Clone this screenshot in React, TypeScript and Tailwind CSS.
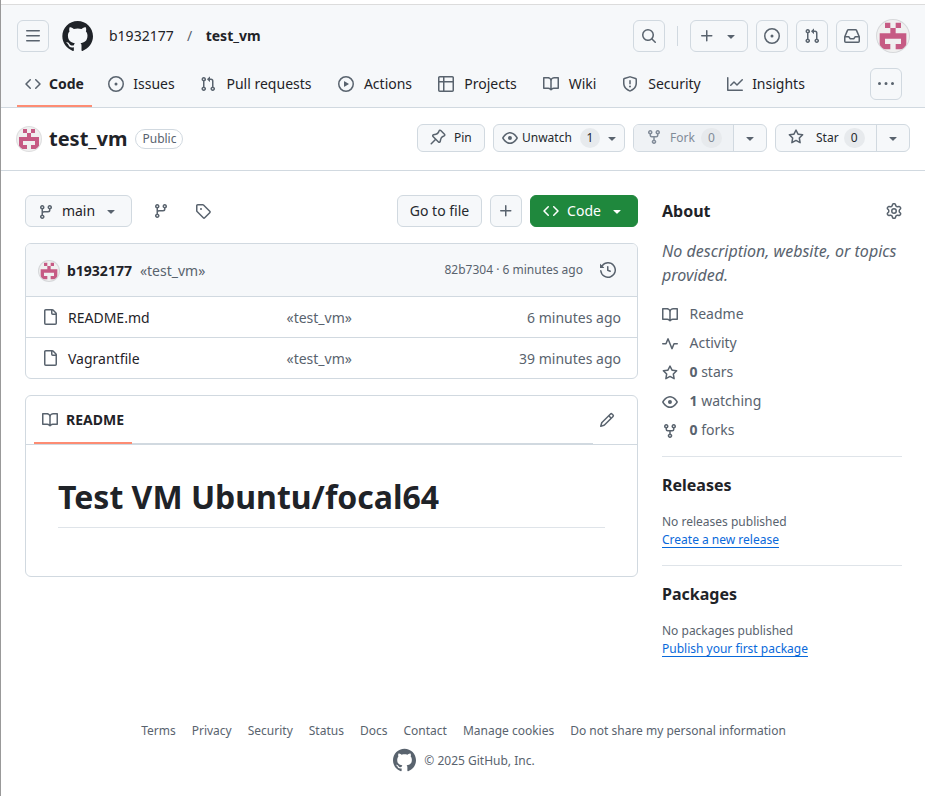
import React from "react";

const PATHS = {
  bars: "M1 2.75A.75.75 0 0 1 1.75 2h12.5a.75.75 0 0 1 0 1.5H1.75A.75.75 0 0 1 1 2.75Zm0 5A.75.75 0 0 1 1.75 7h12.5a.75.75 0 0 1 0 1.5H1.75A.75.75 0 0 1 1 7.75ZM1.75 12h12.5a.75.75 0 0 1 0 1.5H1.75a.75.75 0 0 1 0-1.5Z",
  code: "m11.28 3.22 4.25 4.25a.75.75 0 0 1 0 1.06l-4.25 4.25a.749.749 0 0 1-1.275-.326.749.749 0 0 1 .215-.734L13.94 8l-3.72-3.72a.749.749 0 0 1 .326-1.275.749.749 0 0 1 .734.215Zm-6.56 0a.751.751 0 0 1 1.042.018.751.751 0 0 1 .018 1.042L2.06 8l3.72 3.72a.749.749 0 0 1-.326 1.275.749.749 0 0 1-.734-.215L.47 8.53a.75.75 0 0 1 0-1.06Z",
  issue: "M8 9.5a1.5 1.5 0 1 0 0-3 1.5 1.5 0 0 0 0 3ZM8 0a8 8 0 1 1 0 16A8 8 0 0 1 8 0ZM1.5 8a6.5 6.5 0 1 0 13 0 6.5 6.5 0 0 0-13 0Z",
  pull: "M1.5 3.25a2.25 2.25 0 1 1 3 2.122v5.256a2.251 2.251 0 1 1-1.5 0V5.372A2.25 2.25 0 0 1 1.5 3.25Zm5.677-.177L9.573.677A.25.25 0 0 1 10 .854V2.5h1A2.5 2.5 0 0 1 13.5 5v5.628a2.251 2.251 0 1 1-1.5 0V5a1 1 0 0 0-1-1h-1v1.646a.25.25 0 0 1-.427.177L7.177 3.427a.25.25 0 0 1 0-.354ZM3.75 2.5a.75.75 0 1 0 0 1.5.75.75 0 0 0 0-1.5Zm0 9.5a.75.75 0 1 0 0 1.5.75.75 0 0 0 0-1.5Zm8.25.75a.75.75 0 1 0 1.5 0 .75.75 0 0 0-1.5 0Z",
  play: "M8 0a8 8 0 1 1 0 16A8 8 0 0 1 8 0ZM1.5 8a6.5 6.5 0 1 0 13 0 6.5 6.5 0 0 0-13 0Zm4.879-2.773 4.264 2.559a.25.25 0 0 1 0 .428l-4.264 2.559A.25.25 0 0 1 6 10.559V5.442a.25.25 0 0 1 .379-.215Z",
  table: "M0 1.75C0 .784.784 0 1.75 0h12.5C15.216 0 16 .784 16 1.75v12.5A1.75 1.75 0 0 1 14.25 16H1.75A1.75 1.75 0 0 1 0 14.25ZM6.5 6.5v8h7.75a.25.25 0 0 0 .25-.25V6.5Zm8-1.5V1.75a.25.25 0 0 0-.25-.25H6.5V5Zm-13 1.5v7.75c0 .138.112.25.25.25H5v-8ZM5 5V1.5H1.75a.25.25 0 0 0-.25.25V5Z",
  book: "M0 1.75A.75.75 0 0 1 .75 1h4.253c1.227 0 2.317.59 3 1.501A3.743 3.743 0 0 1 11.006 1h4.245a.75.75 0 0 1 .75.75v10.5a.75.75 0 0 1-.75.75h-4.507a2.25 2.25 0 0 0-1.591.659l-.622.621a.75.75 0 0 1-1.06 0l-.622-.621A2.25 2.25 0 0 0 5.258 13H.75a.75.75 0 0 1-.75-.75Zm7.251 10.324.004-5.073-.002-2.253A2.25 2.25 0 0 0 5.003 2.5H1.5v9h3.757a3.75 3.75 0 0 1 1.994.574ZM8.755 4.75l-.004 7.322a3.752 3.752 0 0 1 1.992-.572H14.5v-9h-3.495a2.25 2.25 0 0 0-2.25 2.25Z",
  shield: "M7.467.133a1.748 1.748 0 0 1 1.066 0l5.25 1.68A1.75 1.75 0 0 1 15 3.48V7c0 1.566-.32 3.182-1.303 4.682-.983 1.498-2.585 2.813-5.032 3.855a1.697 1.697 0 0 1-1.33 0c-2.447-1.042-4.049-2.357-5.032-3.855C1.32 10.182 1 8.566 1 7V3.48a1.75 1.75 0 0 1 1.217-1.667Zm.61 1.429a.25.25 0 0 0-.153 0l-5.25 1.68a.25.25 0 0 0-.174.238V7c0 1.358.275 2.666 1.057 3.86.784 1.194 2.121 2.34 4.366 3.297a.196.196 0 0 0 .154 0c2.245-.956 3.582-2.104 4.366-3.298C13.225 9.666 13.5 8.36 13.5 7V3.48a.251.251 0 0 0-.174-.237l-5.25-1.68ZM8.75 4.75v3a.75.75 0 0 1-1.5 0v-3a.75.75 0 0 1 1.5 0ZM9 10.5a1 1 0 1 1-2 0 1 1 0 0 1 2 0Z",
  graph: "M1.5 1.75V13.5h13.75a.75.75 0 0 1 0 1.5H.75a.75.75 0 0 1-.75-.75V1.75a.75.75 0 0 1 1.5 0Zm14.28 2.53-5.25 5.25a.75.75 0 0 1-1.06 0L7 7.06 4.28 9.78a.751.751 0 0 1-1.042-.018.751.751 0 0 1-.018-1.042l3.25-3.25a.75.75 0 0 1 1.06 0L10 7.94l4.72-4.72a.751.751 0 0 1 1.042.018.751.751 0 0 1 .018 1.042Z",
  kebab: "M8 9a1.5 1.5 0 1 0 0-3 1.5 1.5 0 0 0 0 3ZM1.5 9a1.5 1.5 0 1 0 0-3 1.5 1.5 0 0 0 0 3Zm13 0a1.5 1.5 0 1 0 0-3 1.5 1.5 0 0 0 0 3Z",
  search: "M10.68 11.74a6 6 0 0 1-7.922-8.982 6 6 0 0 1 8.982 7.922l3.04 3.04a.749.749 0 0 1-.326 1.275.749.749 0 0 1-.734-.215ZM11.5 7a4.499 4.499 0 1 0-8.997 0A4.499 4.499 0 0 0 11.5 7Z",
  plus: "M7.75 2a.75.75 0 0 1 .75.75V7h4.25a.75.75 0 0 1 0 1.5H8.5v4.25a.75.75 0 0 1-1.5 0V8.5H2.75a.75.75 0 0 1 0-1.5H7V2.75A.75.75 0 0 1 7.75 2Z",
  caret: "m4.427 7.427 3.396 3.396a.25.25 0 0 0 .354 0l3.396-3.396A.25.25 0 0 0 11.396 7H4.604a.25.25 0 0 0-.177.427Z",
  inbox: "M2.8 2.06A1.75 1.75 0 0 1 4.41 1h7.18c.7 0 1.333.417 1.61 1.06l2.74 6.395c.04.093.06.194.06.295v4.5A1.75 1.75 0 0 1 14.25 15H1.75A1.75 1.75 0 0 1 0 13.25v-4.5c0-.101.02-.202.06-.295Zm1.61.44a.25.25 0 0 0-.23.152L1.887 8H4.75a.75.75 0 0 1 .6.3L6.625 10h2.75l1.275-1.7a.75.75 0 0 1 .6-.3h2.863L11.82 2.652a.25.25 0 0 0-.23-.152Zm10.09 7h-2.875l-1.275 1.7a.75.75 0 0 1-.6.3h-3.5a.75.75 0 0 1-.6-.3L4.375 9.5H1.5v3.75c0 .138.112.25.25.25h12.5a.25.25 0 0 0 .25-.25Z",
  pin: "m11.294.984 3.722 3.722a1.75 1.75 0 0 1-.504 2.826l-1.327.613a3.089 3.089 0 0 0-1.707 2.084l-.584 2.454c-.317 1.332-1.972 1.8-2.94.832L5.75 11.311 1.78 15.28a.749.749 0 1 1-1.06-1.06l3.969-3.97-2.204-2.204c-.968-.968-.5-2.623.832-2.94l2.454-.584a3.08 3.08 0 0 0 2.084-1.707l.613-1.327a1.75 1.75 0 0 1 2.826-.504ZM6.283 9.723l2.732 2.731a.25.25 0 0 0 .42-.119l.584-2.454a4.586 4.586 0 0 1 2.537-3.098l1.328-.613a.25.25 0 0 0 .072-.404l-3.722-3.722a.25.25 0 0 0-.404.072l-.613 1.328a4.584 4.584 0 0 1-3.098 2.537l-2.454.584a.25.25 0 0 0-.119.42l2.731 2.732Z",
  eye: "M8 2c1.981 0 3.671.992 4.933 2.078 1.27 1.091 2.187 2.345 2.637 3.023a1.62 1.62 0 0 1 0 1.798c-.45.678-1.367 1.932-2.637 3.023C11.67 13.008 9.981 14 8 14c-1.981 0-3.671-.992-4.933-2.078C1.797 10.83.88 9.576.43 8.898a1.62 1.62 0 0 1 0-1.798c.45-.677 1.367-1.931 2.637-3.022C4.33 2.992 6.019 2 8 2ZM1.679 7.932a.12.12 0 0 0 0 .136c.411.622 1.241 1.75 2.366 2.717C5.176 11.758 6.527 12.5 8 12.5c1.473 0 2.825-.742 3.955-1.715 1.124-.967 1.954-2.096 2.366-2.717a.12.12 0 0 0 0-.136c-.412-.621-1.242-1.75-2.366-2.717C10.824 4.242 9.473 3.5 8 3.5c-1.473 0-2.825.742-3.955 1.715-1.124.967-1.954 2.096-2.366 2.717ZM8 10a2 2 0 1 1-.001-3.999A2 2 0 0 1 8 10Z",
  fork: "M5 5.372v.878c0 .414.336.75.75.75h4.5a.75.75 0 0 0 .75-.75v-.878a2.25 2.25 0 1 1 1.5 0v.878a2.25 2.25 0 0 1-2.25 2.25h-1.5v2.128a2.251 2.251 0 1 1-1.5 0V8.5h-1.5A2.25 2.25 0 0 1 3.5 6.25v-.878a2.25 2.25 0 1 1 1.5 0ZM5 3.25a.75.75 0 1 0-1.5 0 .75.75 0 0 0 1.5 0Zm6.75.75a.75.75 0 1 0 0-1.5.75.75 0 0 0 0 1.5Zm-3 8.75a.75.75 0 1 0-1.5 0 .75.75 0 0 0 1.5 0Z",
  star: "M8 .25a.75.75 0 0 1 .673.418l1.882 3.815 4.21.612a.75.75 0 0 1 .416 1.279l-3.046 2.97.719 4.192a.751.751 0 0 1-1.088.791L8 12.347l-3.766 1.98a.75.75 0 0 1-1.088-.79l.72-4.194L.818 6.374a.75.75 0 0 1 .416-1.28l4.21-.611L7.327.668A.75.75 0 0 1 8 .25Zm0 2.445L6.615 5.5a.75.75 0 0 1-.564.41l-3.097.45 2.24 2.184a.75.75 0 0 1 .216.664l-.528 3.084 2.769-1.456a.75.75 0 0 1 .698 0l2.77 1.456-.53-3.084a.75.75 0 0 1 .216-.664l2.24-2.183-3.096-.45a.75.75 0 0 1-.564-.41L8 2.694Z",
  branch: "M9.5 3.25a2.25 2.25 0 1 1 3 2.122V6A2.5 2.5 0 0 1 10 8.5H6a1 1 0 0 0-1 1v1.128a2.251 2.251 0 1 1-1.5 0V5.372a2.25 2.25 0 1 1 1.5 0v1.836A2.493 2.493 0 0 1 6 7h4a1 1 0 0 0 1-1v-.628A2.25 2.25 0 0 1 9.5 3.25Zm-6 0a.75.75 0 1 0 1.5 0 .75.75 0 0 0-1.5 0Zm8.25-.75a.75.75 0 1 0 0 1.5.75.75 0 0 0 0-1.5ZM4.25 12a.75.75 0 1 0 0 1.5.75.75 0 0 0 0-1.5Z",
  tag: "M1 7.775V2.75C1 1.784 1.784 1 2.75 1h5.025c.464 0 .91.184 1.238.513l6.25 6.25a1.75 1.75 0 0 1 0 2.474l-5.026 5.026a1.75 1.75 0 0 1-2.474 0l-6.25-6.25A1.752 1.752 0 0 1 1 7.775Zm1.5 0c0 .066.026.13.073.177l6.25 6.25a.25.25 0 0 0 .354 0l5.025-5.025a.25.25 0 0 0 0-.354l-6.25-6.25a.25.25 0 0 0-.177-.073H2.75a.25.25 0 0 0-.25.25ZM6 5a1 1 0 1 1 0 2 1 1 0 0 1 0-2Z",
  history: "m.427 1.927 1.215 1.215a8.002 8.002 0 1 1-1.6 5.685.75.75 0 1 1 1.493-.154 6.5 6.5 0 1 0 1.18-4.458l1.358 1.358A.25.25 0 0 1 3.896 6H.25A.25.25 0 0 1 0 5.75V2.104a.25.25 0 0 1 .427-.177ZM7.75 4a.75.75 0 0 1 .75.75v2.992l2.028.812a.75.75 0 0 1-.557 1.392l-2.5-1A.751.751 0 0 1 7 8.25v-3.5A.75.75 0 0 1 7.75 4Z",
  file: "M2 1.75C2 .784 2.784 0 3.75 0h6.586c.464 0 .909.184 1.237.513l2.914 2.914c.329.328.513.773.513 1.237v9.586A1.75 1.75 0 0 1 13.25 16h-9.5A1.75 1.75 0 0 1 2 14.25Zm1.75-.25a.25.25 0 0 0-.25.25v12.5c0 .138.112.25.25.25h9.5a.25.25 0 0 0 .25-.25V6h-2.75A1.75 1.75 0 0 1 9 4.25V1.5Zm6.75.062V4.25c0 .138.112.25.25.25h2.688l-.011-.013-2.914-2.914-.013-.011Z",
  pencil: "M11.013 1.427a1.75 1.75 0 0 1 2.474 0l1.086 1.086a1.75 1.75 0 0 1 0 2.474l-8.61 8.61c-.21.21-.47.364-.756.445l-3.251.93a.75.75 0 0 1-.927-.928l.929-3.25c.081-.286.235-.547.445-.758l8.61-8.61Zm.176 4.823L9.75 4.81l-6.286 6.287a.253.253 0 0 0-.064.108l-.558 1.953 1.953-.558a.253.253 0 0 0 .108-.064Zm1.238-3.763a.25.25 0 0 0-.354 0L10.811 3.75l1.439 1.44 1.263-1.263a.25.25 0 0 0 0-.354Z",
  pulse: "M6 2c.306 0 .582.187.696.471L10 10.731l1.304-3.26A.751.751 0 0 1 12 7h3.25a.75.75 0 0 1 0 1.5h-2.742l-1.812 4.528a.751.751 0 0 1-1.392 0L6 4.77 4.696 8.03A.75.75 0 0 1 4 8.5H.75a.75.75 0 0 1 0-1.5h2.742l1.812-4.529A.751.751 0 0 1 6 2Z",
  gear: "M8 0a8.2 8.2 0 0 1 .701.031C9.444.095 9.99.645 10.16 1.29l.288 1.107c.018.066.079.158.212.224.231.114.454.243.668.386.123.082.233.09.299.071l1.103-.303c.644-.176 1.392.021 1.82.63.27.385.506.792.704 1.218.315.675.111 1.422-.364 1.891l-.814.806c-.049.048-.098.147-.088.294.016.257.016.515 0 .772-.01.147.038.246.088.294l.814.806c.475.469.679 1.216.364 1.891a7.977 7.977 0 0 1-.704 1.217c-.428.61-1.176.807-1.82.63l-1.102-.302c-.067-.019-.177-.011-.3.071a5.909 5.909 0 0 1-.668.386c-.133.066-.194.158-.211.224l-.29 1.106c-.168.646-.715 1.196-1.458 1.26a8.006 8.006 0 0 1-1.402 0c-.743-.064-1.289-.614-1.458-1.26l-.289-1.106c-.018-.066-.079-.158-.212-.224a5.738 5.738 0 0 1-.668-.386c-.123-.082-.233-.09-.299-.071l-1.103.303c-.644.176-1.392-.021-1.82-.63a8.12 8.12 0 0 1-.704-1.218c-.315-.675-.111-1.422.363-1.891l.815-.806c.05-.048.098-.147.088-.294a6.214 6.214 0 0 1 0-.772c.01-.147-.038-.246-.088-.294l-.815-.806C.635 6.045.431 5.298.746 4.623a7.92 7.92 0 0 1 .704-1.217c.428-.61 1.176-.807 1.82-.63l1.102.302c.067.019.177.011.3-.071.214-.143.437-.272.668-.386.133-.066.194-.158.211-.224l.29-1.106C6.009.645 6.556.095 7.299.03 7.53.01 7.764 0 8 0Zm-.571 1.525c-.036.003-.108.036-.137.146l-.289 1.105c-.147.561-.549.967-.998 1.189-.173.086-.34.183-.5.29-.417.278-.97.423-1.529.27l-1.103-.303c-.109-.03-.175.016-.195.045-.22.312-.412.644-.573.99-.014.031-.021.11.059.19l.815.806c.411.406.562.957.53 1.456a4.709 4.709 0 0 0 0 .582c.032.499-.119 1.05-.53 1.456l-.815.806c-.081.08-.073.159-.059.19.162.346.353.677.573.989.02.03.085.076.195.046l1.102-.303c.56-.153 1.113-.008 1.53.27.161.107.328.204.501.29.447.222.85.629.997 1.189l.289 1.105c.029.109.101.143.137.146a6.6 6.6 0 0 0 1.142 0c.036-.003.108-.036.137-.146l.289-1.105c.147-.561.549-.967.998-1.189.173-.086.34-.183.5-.29.417-.278.97-.423 1.529-.27l1.103.303c.109.029.175-.016.195-.045.22-.313.411-.644.573-.99.014-.031.021-.11-.059-.19l-.815-.806c-.411-.406-.562-.957-.53-1.456a4.709 4.709 0 0 0 0-.582c-.032-.499.119-1.05.53-1.456l.815-.806c.081-.08.073-.159.059-.19a6.464 6.464 0 0 0-.573-.989c-.02-.03-.085-.076-.195-.046l-1.102.303c-.56.153-1.113.008-1.53-.27a4.44 4.44 0 0 0-.501-.29c-.447-.222-.85-.629-.997-1.189l-.289-1.105c-.029-.11-.101-.143-.137-.146a6.6 6.6 0 0 0-1.142 0ZM11 8a3 3 0 1 1-6 0 3 3 0 0 1 6 0ZM9.5 8a1.5 1.5 0 1 0-3.001.001A1.5 1.5 0 0 0 9.5 8Z",
};

type IconName = keyof typeof PATHS;

function Icon({ name, className = "text-[#59636e]" }: { name: IconName; className?: string }) {
  return (
    <svg viewBox="0 0 16 16" width="16" height="16" fill="currentColor" className={`shrink-0 ${className}`}>
      <path d={PATHS[name]} />
    </svg>
  );
}

function Mark({ size, className }: { size: number; className: string }) {
  return (
    <svg viewBox="0 0 24 24" width={size} height={size} fill="currentColor" className={`shrink-0 ${className}`}>
      <path d="M12.5.75C6.146.75 1 5.896 1 12.25c0 5.089 3.292 9.387 7.863 10.91.575.101.79-.244.79-.546 0-.273-.014-1.178-.014-2.142-2.889.532-3.636-.704-3.866-1.35-.13-.331-.69-1.352-1.18-1.625-.402-.216-.977-.748-.014-.762.906-.014 1.553.834 1.769 1.179 1.035 1.74 2.688 1.25 3.349.948.1-.747.402-1.25.733-1.538-2.559-.287-5.232-1.279-5.232-5.678 0-1.25.445-2.285 1.178-3.09-.115-.288-.517-1.467.115-3.048 0 0 .963-.302 3.163 1.179.92-.259 1.897-.388 2.875-.388.977 0 1.955.13 2.875.388 2.2-1.495 3.162-1.179 3.162-1.179.633 1.581.23 2.76.115 3.048.733.805 1.179 1.825 1.179 3.09 0 4.413-2.688 5.39-5.247 5.678.417.36.776 1.05.776 2.128 0 1.538-.014 2.774-.014 3.162 0 .302.216.662.79.547C20.709 21.637 24 17.324 24 12.25 24 5.896 18.854.75 12.5.75Z" />
    </svg>
  );
}

/* Identicon: a 5x5 grid of cells inside a half-cell margin. */
function Avatar({ className }: { className: string }) {
  return (
    <span className={`block shrink-0 overflow-hidden rounded-full bg-[#f0f0f0] ring-1 ring-[#1f2328]/15 ${className}`}>
      <svg viewBox="0 0 12 12" className="block h-full w-full" fill="#c65b84">
        <path d="M3 1h2v2h2V1h2v2H7v2h4v6H7V9h2V7H3v2h2v2H1V5h4V3H3Z" />
      </svg>
    </span>
  );
}

const TABS: { icon: IconName; label: string; width: string }[] = [
  { icon: "code", label: "Code", width: "w-[75px]" },
  { icon: "issue", label: "Issues", width: "w-[84px]" },
  { icon: "pull", label: "Pull requests", width: "w-[130px]" },
  { icon: "play", label: "Actions", width: "w-[92px]" },
  { icon: "table", label: "Projects", width: "w-[97px]" },
  { icon: "book", label: "Wiki", width: "w-[71px]" },
  { icon: "shield", label: "Security", width: "w-[97px]" },
  { icon: "graph", label: "Insights", width: "w-[95px]" },
];

const box = "flex h-8 items-center justify-center rounded-md border border-[#d1d9e0]";
const smallBtn = "flex h-7 items-center rounded-md border border-[#d1d9e0] bg-[#f6f8fa] text-xs text-[#25292e]";
const counter = "flex h-5 items-center justify-center rounded-full bg-[#e7eaed]";

function Header() {
  return (
    <header className="h-[104px] border-t border-b border-t-[#dcdcdc] border-b-[#d1d9e0] bg-[#f6f8fa]">
      <div className="flex h-[47px] items-end pl-4 pr-[17px]">
        <button className={`${box} w-8`}><Icon name="bars" /></button>
        <Mark size={32} className="ml-3 text-[#1f2328]" />
        <div className="ml-4 flex h-8 items-center">
          <span>b1932177</span>
          <span className="w-[32px] text-center text-[#59636e]">/</span>
          <span className="font-bold">test_vm</span>
        </div>
        <div className="ml-auto flex h-8 items-center">
          <button className={`${box} w-8`}><Icon name="search" /></button>
          <span className="mx-3 h-5 w-px bg-[#d1d9e0]" />
          <button className={`${box} w-[58px] gap-2`}><Icon name="plus" /><Icon name="caret" /></button>
          <button className={`${box} ml-2 w-8`}><Icon name="issue" /></button>
          <button className={`${box} ml-2 w-8`}><Icon name="pull" /></button>
          <button className={`${box} ml-2 w-8`}><Icon name="inbox" /></button>
          <Avatar className="ml-[9px] h-8 w-8" />
        </div>
      </div>
      <nav className="mt-2 flex h-[47px] items-start pl-4 pr-6">
        <div className="flex gap-2">
          {TABS.map((t, i) => (
            <a key={t.label} className={`flex h-[47px] items-center gap-2 border-b-2 px-2 pt-[3px] ${t.width} ${i === 0 ? "-mr-px border-[#fd8c73] font-bold" : "border-transparent"} ${i === 1 ? "ml-px" : ""}`}>
              <Icon name={t.icon} />
              <span className="flex-1 text-center whitespace-nowrap">{t.label}</span>
            </a>
          ))}
        </div>
        <button className={`${box} mt-2 ml-auto w-8`}><Icon name="kebab" /></button>
      </nav>
    </header>
  );
}

function RepoBar() {
  return (
    <div className="flex h-[63px] items-center border-b border-[#d1d9e0] pl-4 pr-4 pb-px">
      <Avatar className="h-6 w-6" />
      <h1 className="ml-2 text-xl font-bold">test_vm</h1>
      <span className="ml-2 flex h-5 w-12 items-center justify-center rounded-full border border-[#d1d9e0] text-xs text-[#59636e]">Public</span>
      <div className="ml-auto flex gap-2 pb-px">
        <button className={`${smallBtn} w-[68px] pl-3`}><Icon name="pin" className="mb-[2px] text-[#59636e]" /><span className="ml-2">Pin</span></button>
        <button className={`${smallBtn} w-[132px] pl-2`}>
          <Icon name="eye" />
          <span className="ml-1">Unwatch</span>
          <span className={`${counter} ml-2 w-5`}>1</span>
          <Icon name="caret" className="ml-1 text-[#59636e]" />
        </button>
        <div className={`${smallBtn} w-[134px] overflow-hidden`}>
          <button className="flex h-full w-[99px] items-center bg-[#eff2f5] pl-3 text-[#818b98]">
            <Icon name="fork" className="mb-[2px] text-[#818b98]" />
            <span className="ml-2">Fork</span>
            <span className={`${counter} ml-[6px] w-[21px]`}>0</span>
          </button>
          <button className="flex h-full flex-1 items-center justify-center border-l border-[#d1d9e0]"><Icon name="caret" /></button>
        </div>
        <div className={`${smallBtn} w-[135px] overflow-hidden`}>
          <button className="flex h-full w-[100px] items-center pl-3">
            <Icon name="star" className="mb-[2px] text-[#59636e]" />
            <span className="ml-3">Star</span>
            <span className={`${counter} ml-[5px] w-[21px]`}>0</span>
          </button>
          <button className="flex h-full flex-1 items-center justify-center border-l border-[#d1d9e0]"><Icon name="caret" /></button>
        </div>
      </div>
    </div>
  );
}

function Toolbar() {
  return (
    <div className="flex h-8 items-center">
      <button className={`${box} w-[107px] bg-[#f6f8fa]`}>
        <Icon name="branch" className="mt-[2px] text-[#59636e]" /><span className="ml-2">main</span><Icon name="caret" className="ml-2 text-[#59636e]" />
      </button>
      <Icon name="branch" className="ml-[21px] text-[#59636e]" />
      <Icon name="tag" className="ml-[26px] text-[#59636e]" />
      <button className={`${box} ml-auto w-[85px] bg-[#f6f8fa] text-[#25292e]`}>Go to file</button>
      <button className={`${box} ml-2 w-8 bg-[#f6f8fa]`}><Icon name="plus" /></button>
      <button className="ml-2 flex h-8 w-[108px] items-center justify-center gap-2 rounded-md border border-[#1f883d] bg-[#1f883d] text-white">
        <Icon name="code" className="text-white" /><span>Code</span><Icon name="caret" className="text-white" />
      </button>
    </div>
  );
}

function Files() {
  const rows = [
    ["README.md", "«test_vm»", "6 minutes ago"],
    ["Vagrantfile", "«test_vm»", "39 minutes ago"],
  ];
  return (
    <div className="mt-4 overflow-hidden rounded-md border border-[#d1d9e0]">
      <div className="flex h-[52px] items-center bg-[#f6f8fa] pl-[13px] pr-[21px]">
        <Avatar className="mt-[2px] h-5 w-5" />
        <span className="ml-2 pt-[2px] font-bold">b1932177</span>
        <span className="ml-2 pt-[2px] text-[#59636e]">«test_vm»</span>
        <span className="ml-auto text-xs leading-5 text-[#59636e]">82b7304 · 6 minutes ago</span>
        <Icon name="history" className="ml-[17px] text-[#59636e]" />
      </div>
      {rows.map((r) => (
        <div key={r[0]} className="flex h-[41px] items-center border-t border-[#d1d9e0] px-4">
          <Icon name="file" />
          <span className="ml-[10px] w-[218.5px] pt-[2px]">{r[0]}</span>
          <span className="pt-[2px] text-[#59636e]">{r[1]}</span>
          <span className="ml-auto pt-[2px] text-[#59636e]">{r[2]}</span>
        </div>
      ))}
    </div>
  );
}

function Readme() {
  return (
    <div className="mt-4 h-[182px] rounded-md border border-[#d1d9e0]">
      <div className="flex h-[49px] border-b border-[#d1d9e0] pl-2 pr-[22px]">
        <div className="flex h-12 w-[559px] border-b border-[#d1d9e0]">
          <div className="flex h-12 w-[98px] items-center border-b-2 border-[#fd8c73] pl-2 pt-[2px] font-bold">
            <Icon name="book" /><span className="ml-2">README</span>
          </div>
        </div>
        <Icon name="pencil" className="ml-auto mt-4 text-[#59636e]" />
      </div>
      <div className="px-8 pt-8">
        <h2 className="h-[51px] border-b border-[#d1d9e0]/70 text-[32px] leading-[40px] font-bold">Test VM Ubuntu/focal64</h2>
      </div>
    </div>
  );
}

const STATS: { icon: IconName; count?: string; label: string }[] = [
  { icon: "book", label: "Readme" },
  { icon: "pulse", label: "Activity" },
  { icon: "star", count: "0", label: "stars" },
  { icon: "eye", count: "1", label: "watching" },
  { icon: "fork", count: "0", label: "forks" },
];

function EmptySection({ title, text, link }: { title: string; text: string; link: string }) {
  return (
    <section className="h-[109px] border-t border-[#d1d9e0]/70 pt-4">
      <h2 className="text-base leading-6 font-bold">{title}</h2>
      <p className="mt-4 text-xs leading-[18px] text-[#59636e]">{text}</p>
      <a className="block text-xs leading-[18px] text-[#0969da] underline underline-offset-[3px]">{link}</a>
    </section>
  );
}

function Sidebar() {
  return (
    <aside className="w-[240px] text-[#59636e]">
      <div className="flex h-8 items-center justify-between">
        <h2 className="text-base font-bold text-[#1f2328]">About</h2>
        <Icon name="gear" />
      </div>
      <p className="mt-3 mb-3 text-base leading-6 italic">No description, website, or topics provided.</p>
      {STATS.map((s) => (
        <div key={s.label} className="flex h-[29px] items-center">
          <Icon name={s.icon} className="mt-[2px] text-[#59636e]" />
          <span className="ml-[11.5px]">{s.count && <b>{s.count} </b>}{s.label}</span>
        </div>
      ))}
      <div className="mt-3 text-[#1f2328]">
        <EmptySection title="Releases" text="No releases published" link="Create a new release" />
        <EmptySection title="Packages" text="No packages published" link="Publish your first package" />
      </div>
    </aside>
  );
}

const LINKS = ["Terms", "Privacy", "Security", "Status", "Docs", "Contact", "Manage cookies", "Do not share my personal information"];

export default function App() {
  return (
    <div className="h-[796px] w-full overflow-hidden">
      <div className="h-full w-[926px] border-l border-[#999999] bg-white pt-1 text-sm leading-5 text-[#1f2328] [font-family:'Noto_Sans',sans-serif]">
        <Header />
        <RepoBar />
        <div className="flex gap-6 px-6 pt-6">
          <main className="w-[613px]">
            <Toolbar />
            <Files />
            <Readme />
          </main>
          <Sidebar />
        </div>
        <footer className="mt-12 text-xs text-[#59636e]">
          <div className="flex justify-center gap-4 leading-[18px]">
            {LINKS.map((l) => <a key={l} className="whitespace-nowrap">{l}</a>)}
          </div>
          <div className="mt-2 flex items-center justify-center gap-2">
            <Mark size={24} className="text-[#59636e]" />
            <span className="pt-[2px]">© 2025 GitHub, Inc.</span>
          </div>
        </footer>
      </div>
    </div>
  );
}
